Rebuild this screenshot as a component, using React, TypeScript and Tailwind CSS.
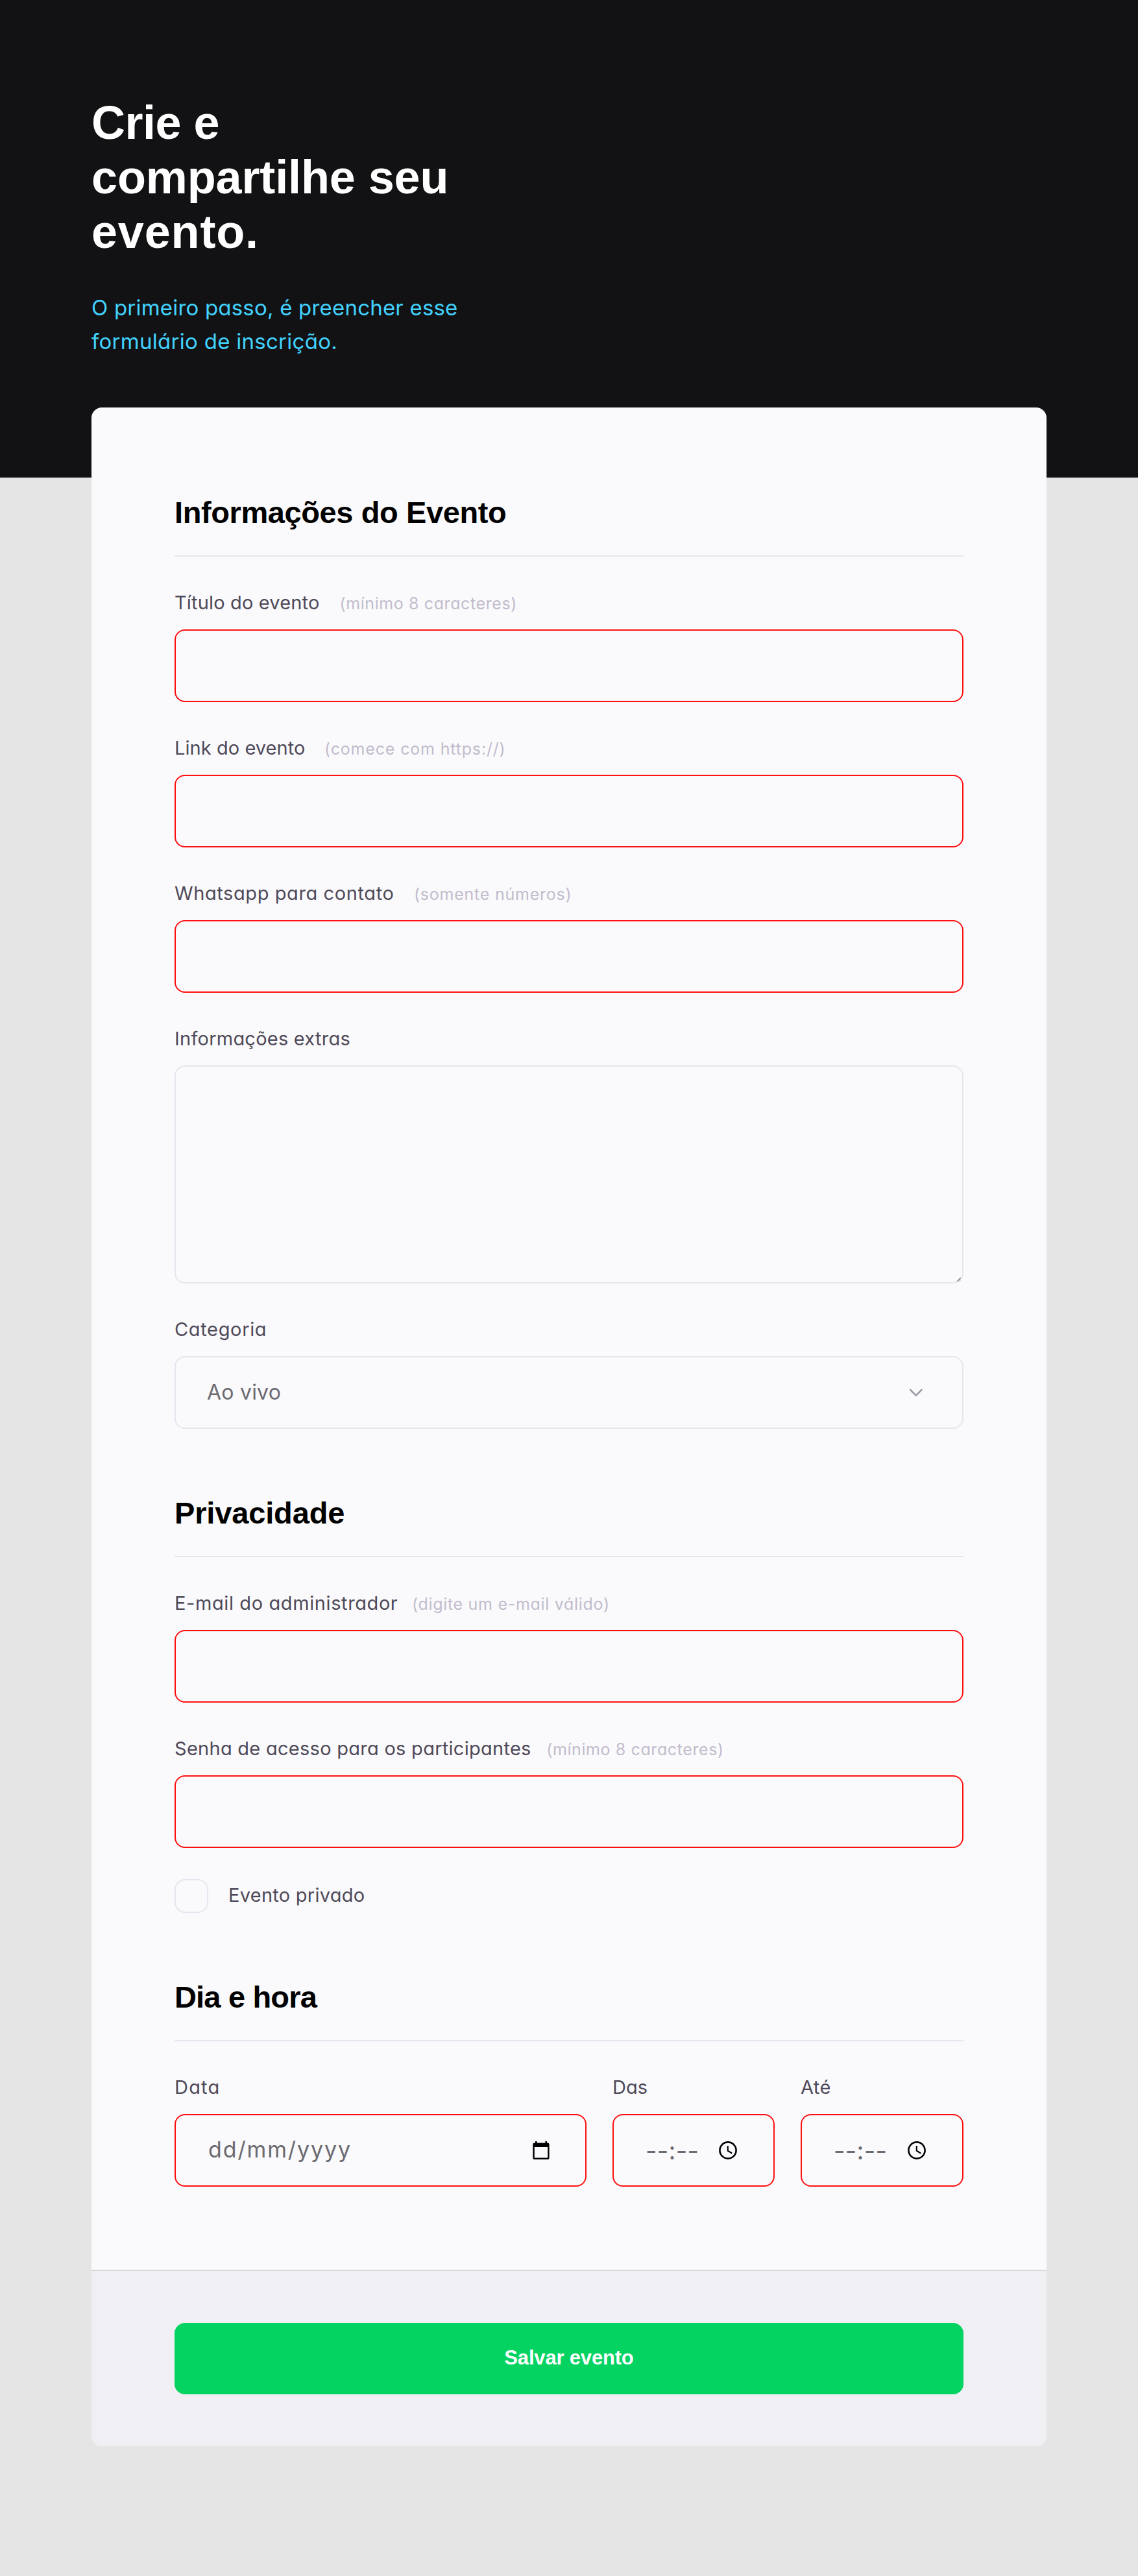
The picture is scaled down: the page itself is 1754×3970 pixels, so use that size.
import type { ReactNode } from "react";

const heading =
  "h-24 border-b-2 border-[#e6e6f0] text-[47px] leading-[56px] font-bold text-black font-['Liberation_Sans',Arial,sans-serif]";

function Section({ title, tracking, className = "", children }: { title: string; tracking: string; className?: string; children: ReactNode }) {
  return (
    <section className={className}>
      <h2 className={`${heading} ${tracking}`}>{title}</h2>
      {children}
    </section>
  );
}

function Label({ text, tracking, hint, hintClass = "" }: { text: string; tracking: string; hint?: string; hintClass?: string }) {
  return (
    <div className="mt-[50px] flex h-[42px] items-baseline whitespace-nowrap leading-[42px]">
      <label className={`text-[29px] text-[#4e4958] ${tracking}`}>{text}</label>
      {hint && <span className={`text-[25px] text-[#c1bccc] ${hintClass}`}>{hint}</span>}
    </div>
  );
}

const boxBase = "mt-5 h-28 w-full rounded-2xl border-2 bg-[#fafafc]";

function TextInput({ type = "text" }: { type?: string }) {
  return <input type={type} className={`${boxBase} block border-[#ff1010] px-12 text-[32px] outline-none`} />;
}

function CalendarIcon() {
  return (
    <svg width="26" height="28" viewBox="0 0 26 28" fill="none">
      <path
        fill="#000"
        fillRule="evenodd"
        d="M4 0h2.6v2.4h12.8V0H22v2.4h1.3a2.3 2.3 0 0 1 2.3 2.3v21a2.3 2.3 0 0 1-2.3 2.3H2.6a2.3 2.3 0 0 1-2.3-2.3v-21a2.3 2.3 0 0 1 2.3-2.3H4zM2.8 9v16.6h20.4V9z"
      />
    </svg>
  );
}

function ClockIcon() {
  return (
    <svg width="28" height="28" viewBox="0 0 28 28" fill="none" stroke="#000">
      <circle cx="14" cy="14" r="12.6" strokeWidth="2.6" />
      <path d="M13.8 7v7.7l6.4 3.8" strokeWidth="2.1" />
    </svg>
  );
}

function TimeInput() {
  return (
    <div className={`${boxBase} flex items-center justify-between border-[#ff1010] pr-[56px] pl-[49px]`}>
      <span className="text-[38px] leading-[52px] tracking-[0.25px] text-[#6b6a70]">--:--</span>
      <ClockIcon />
    </div>
  );
}

export default function App() {
  return (
    <div className="min-h-[3970px] bg-[#e5e5e5] bg-[linear-gradient(#121214,#121214)] bg-[length:100%_736px] bg-no-repeat font-['Inter','Open_Sans',sans-serif] [font-feature-settings:'cv11']">
      <div className="mx-auto w-[1472px] pb-[200px]">
        <header className="h-[628px] pt-[147px]">
          <h1 className="font-['Liberation_Sans',Arial,sans-serif] text-[72px] leading-[84px] font-bold text-white">
            <span className="block tracking-[-0.5px]">Crie e</span>
            <span className="block tracking-[-0.12px]">compartilhe seu</span>
            <span className="block tracking-[0.83px]">evento.</span>
          </h1>
          <p className="mt-[49px] text-[33px] leading-[52px] text-[#42d3ff]">
            <span className="block tracking-[0.2px]">O primeiro passo, é preencher esse</span>
            <span className="block tracking-[0.28px]">formulário de inscrição.</span>
          </p>
        </header>

        <form className="overflow-hidden rounded-2xl bg-[#fafafc]">
          <div className="px-32 pt-[134px] pb-32">
            <Section title="Informações do Evento" tracking="tracking-[-0.4px]">
              <Label text="Título do evento" tracking="tracking-[0.155px]" hint="(mínimo 8 caracteres)" hintClass="ml-[31px] tracking-[0.6px]" />
              <TextInput />
              <Label text="Link do evento" tracking="tracking-[0.06px]" hint="(comece com https://)" hintClass="ml-[29.5px] tracking-[0.835px]" />
              <TextInput type="url" />
              <Label text="Whatsapp para contato" tracking="tracking-[0.595px]" hint="(somente números)" hintClass="ml-[30.5px] tracking-[0.77px]" />
              <TextInput type="tel" />
              <Label text="Informações extras" tracking="tracking-[0.235px]" />
              <div className="relative mt-5 h-[336px]">
                <textarea className="block h-full w-full resize-none rounded-2xl border-2 border-[#e6e6f0] bg-[#fafafc] px-12 py-6 text-[32px] outline-none" />
                <svg className="absolute right-[4px] bottom-[3px]" width="6" height="6" viewBox="0 0 6 6" stroke="#555">
                  <path d="M0.3 5.7 5.7 0.3" strokeWidth="1.2" />
                  <path d="M3.4 5.8 5.8 3.4" strokeWidth="1" stroke="#999" />
                </svg>
              </div>
              <Label text="Categoria" tracking="tracking-[0.65px]" />
              <div className={`${boxBase} flex items-center justify-between border-[#e6e6f0] pr-[61px] pl-12`}>
                <span className="text-[32px] leading-[52px] tracking-[0.22px] text-[#6b6a70]">Ao vivo</span>
                <svg width="21" height="13" viewBox="0 0 21 13" fill="none" stroke="#9c98a6" strokeWidth="2.6" strokeLinecap="round" strokeLinejoin="round">
                  <path d="m2.2 2 8.6 8.6L19.4 2" />
                </svg>
              </div>
            </Section>

            <Section title="Privacidade" tracking="tracking-[-0.15px]" className="mt-[102px]">
              <Label text="E-mail do administrador" tracking="tracking-[0.6px]" hint="(digite um e-mail válido)" hintClass="ml-[21.5px] tracking-[0.7px]" />
              <TextInput type="email" />
              <Label text="Senha de acesso para os participantes" tracking="tracking-[0.27px]" hint="(mínimo 8 caracteres)" hintClass="ml-[23.5px] tracking-[0.6px]" />
              <TextInput type="password" />
              <div className="mt-12 flex h-[52px] items-center gap-[31px]">
                <span className="size-[52px] rounded-2xl border-2 border-[#e6e6f0]" />
                <label className="pb-[3px] text-[29px] leading-[42px] tracking-[0.27px] text-[#4e4958]">Evento privado</label>
              </div>
            </Section>

            <Section title="Dia e hora" tracking="tracking-[-0.82px]" className="mt-[102px]">
              <div className="grid grid-cols-[635px_250px_251px] gap-10">
                <div>
                  <Label text="Data" tracking="tracking-[1.2px]" />
                  <div className={`${boxBase} flex items-center justify-between border-[#ff1010] pr-[55px] pl-[50px]`}>
                    <span className="pb-[3px] text-[34px] leading-[52px] tracking-[1.88px] text-[#6b6a70]">dd/mm/yyyy</span>
                    <CalendarIcon />
                  </div>
                </div>
                <div>
                  <Label text="Das" tracking="tracking-[0.05px]" />
                  <TimeInput />
                </div>
                <div>
                  <Label text="Até" tracking="tracking-[0.4px]" />
                  <TimeInput />
                </div>
              </div>
            </Section>
          </div>

          <footer className="border-t-2 border-[#d8d8da] bg-[#f0eff4] px-32 py-20">
            <button type="button" className="block h-[110px] w-full rounded-2xl bg-[#04d361] pb-[2px] font-['Liberation_Sans',Arial,sans-serif] text-[31px] font-bold tracking-[-0.18px] text-white">
              Salvar evento
            </button>
          </footer>
        </form>
      </div>
    </div>
  );
}
